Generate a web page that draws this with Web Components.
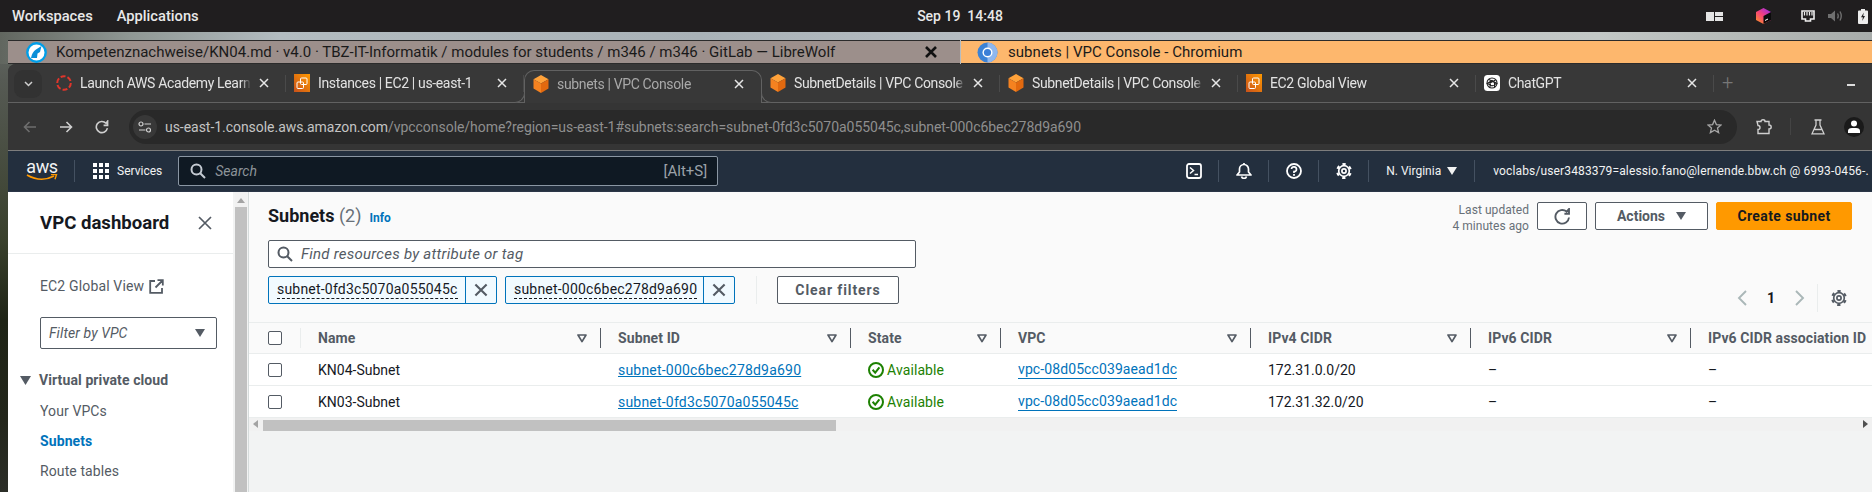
<!DOCTYPE html>
<html lang="en">
<head>
<meta charset="utf-8">
<title>subnets | VPC Console</title>
<style>
    html, body{ margin : 0; width : 1872px; height : 492px; overflow : hidden; }
    body{
        font-family : Roboto, "Noto Sans", sans-serif;
        display : flex;
        flex-direction : column;
        background : linear-gradient(180deg, #6d7370 0px, #565a54 80px, #39402c 240px, #1f2416 320px, #23261b 420px, #2c2e28 492px);
    }
</style>
</head>
<body>
<gnome-bar></gnome-bar>
<window-list></window-list>
<browser-window>
    <tab-strip>
        <browser-tab icon="launch">Launch AWS Academy Learner Lab</browser-tab>
        <browser-tab icon="ec2">Instances | EC2 | us-east-1</browser-tab>
        <browser-tab icon="box" active>subnets | VPC Console</browser-tab>
        <browser-tab icon="box">SubnetDetails | VPC Console</browser-tab>
        <browser-tab icon="box">SubnetDetails | VPC Console</browser-tab>
        <browser-tab icon="ec2">EC2 Global View</browser-tab>
        <browser-tab icon="gpt">ChatGPT</browser-tab>
    </tab-strip>
    <url-bar></url-bar>
    <aws-nav></aws-nav>
    <console-body>
        <vpc-sidebar slot="side"></vpc-sidebar>
        <subnet-header slot="main"></subnet-header>
        <subnet-table slot="main"></subnet-table>
    </console-body>
</browser-window>

<script>
"use strict";

//All the little drawings live here so the components stay readable
const ICONS = {
    box : `<svg width="16" height="18" viewBox="0 0 16 18"><polygon points="8,0 15.5,4.2 8,8.6 .5,4.2" fill="#ffa23a"/><polygon points=".5,4.2 8,8.6 8,18 .5,13.6" fill="#f58220"/><polygon points="15.5,4.2 8,8.6 8,18 15.5,13.6" fill="#e2690f"/></svg>`,
    ec2 : `<svg width="16" height="18" viewBox="0 0 16 18"><defs><linearGradient id="e" x1="0" y1="1" x2="1" y2="0"><stop offset="0" stop-color="#c8511b"/><stop offset="1" stop-color="#ff9900"/></linearGradient></defs><rect width="16" height="18" fill="url(#e)"/><g fill="none" stroke="#fff" stroke-width="1"><rect x="3" y="8" width="6.5" height="6.5" rx="1"/><rect x="6.5" y="4" width="6.5" height="6.5" rx="1"/></g></svg>`,
    launch : `<svg width="16" height="16" viewBox="0 0 16 16"><circle cx="8" cy="8" r="6.8" fill="none" stroke="#e0352b" stroke-width="2" stroke-dasharray="5 2.1"/></svg>`,
    gpt : `<svg width="16" height="16" viewBox="0 0 16 16"><rect width="16" height="16" rx="3.5" fill="#fff"/><g fill="none" stroke="#222" stroke-width="1.1"><circle cx="8" cy="8" r="5"/><path d="M5 4.5 L10.5 7.5 V12 M11.5 5 L6 8 L6 12.5 M3.2 8.5 L8 5.5 L12.8 8.5 L8 11 Z"/></g></svg>`,
    x : `<svg width="10" height="10" viewBox="0 0 10 10"><path d="M1 1 L9 9 M9 1 L1 9" stroke="currentColor" stroke-width="1.5" fill="none"/></svg>`,
    filter : `<svg width="10" height="9" viewBox="0 0 10 9"><path d="M1 1 H9 L5 7.6 Z" fill="none" stroke="#545b64" stroke-width="1.7" stroke-linejoin="round"/></svg>`,
    caret : `<svg width="10" height="8" viewBox="0 0 10 8"><path d="M0 0 H10 L5 8 Z" fill="currentColor"/></svg>`,
    mag : `<svg width="16" height="16" viewBox="0 0 16 16"><circle cx="6.5" cy="6.5" r="5" fill="none" stroke="currentColor" stroke-width="2"/><path d="M10.2 10.2 L15 15" stroke="currentColor" stroke-width="2"/></svg>`,
    gear : `<svg width="16" height="16" viewBox="0 0 16 16"><g fill="none" stroke="currentColor"><circle cx="8" cy="8" r="2.1" stroke-width="1.7"/><circle cx="8" cy="8" r="5.3" stroke-width="1.7"/><circle cx="8" cy="8" r="6.8" stroke-width="2.2" stroke-dasharray="3.2 3.92" transform="rotate(-103 8 8)"/></g></svg>`,
    check : `<svg width="16" height="16" viewBox="0 0 16 16"><circle cx="8" cy="8" r="7" fill="none" stroke="#1d8102" stroke-width="2"/><path d="M4.6 7.8 L7.2 10.6 L11.4 5.4" fill="none" stroke="#1d8102" stroke-width="2"/></svg>`
};

class GnomeBar extends HTMLElement{
    constructor(){
        super();
        this.attachShadow({ mode : "open" });
        this.shadowRoot.innerHTML = `
            <style>
                :host{ display : grid; grid-template-columns : 1fr auto 1fr; align-items : center; height : 32px; background : #201e1f; color : #e8e8e8; font-size : 14.7px; font-weight : 500; flex : none; }
                #left{ display : flex; gap : 24px; padding-left : 12px; }
                #clock{ font-size : 14px; padding-left : 48px; }
                #right{ display : flex; justify-content : flex-end; align-items : center; padding-right : 4px; }
                #layout{ margin-right : 33px; }
                #toolbox{ margin-right : 30px; }
                #net{ margin-right : 13px; }
                #sound{ margin-right : 15px; }
                svg{ display : block; }
            </style>
            <div id="left"><span>Workspaces</span><span>Applications</span></div>
            <div id="clock">Sep 19&nbsp; 14:48</div>
            <div id="right">
                <svg id="layout" width="17" height="9" viewBox="0 0 17 9"><path d="M0 0 H8 V9 H0 Z M9 0 H17 V4 H9 Z M9 5 H17 V9 H9 Z" fill="#e4e4e4"/></svg>
                <svg id="toolbox" width="15" height="16" viewBox="0 0 15 16"><defs><linearGradient id="t" x1="0" y1="1" x2=".8" y2="0"><stop offset="0" stop-color="#ff9a1f"/><stop offset=".55" stop-color="#f5417a"/><stop offset="1" stop-color="#a02be0"/></linearGradient></defs><polygon points="7.5,0 15,4 15,12 7.5,16 0,12 0,4" fill="url(#t)"/><polygon points="7.5,8 15,4 15,12 7.5,16" fill="#0b0b0b"/><path d="M9 12.5 L12 11" stroke="#fff" stroke-width="1"/></svg>
                <svg id="net" width="14" height="12" viewBox="0 0 14 12"><path d="M1 1 H13 V9 H9.5 V11 H4.5 V9 H1 Z" fill="none" stroke="#eee" stroke-width="1.6"/><path d="M3.5 2 V5.5 M6 2 V5.5 M8.5 2 V5.5 M11 2 V5.5" stroke="#eee" stroke-width="1.2"/></svg>
                <svg id="sound" width="15" height="12" viewBox="0 0 15 12"><path d="M0 4 H3 L7 .5 V11.5 L3 8 H0 Z" fill="#6f6f6f"/><path d="M9.5 3.5 Q11 6 9.5 8.5 M12 1.5 Q14.5 6 12 10.5" fill="none" stroke="#6f6f6f" stroke-width="1.4"/></svg>
                <svg width="10" height="15" viewBox="0 0 10 15"><path d="M3 0 H7 V1.5 H9 Q10 1.5 10 2.5 V14 Q10 15 9 15 H1 Q0 15 0 14 V2.5 Q0 1.5 1 1.5 H3 Z" fill="#ececec"/><path d="M5.8 3.5 L3 8.2 H4.9 L4.2 12 L7 7 H5.2 Z" fill="#201e1f"/></svg>
            </div>
        `;
    }
}
window.customElements.define("gnome-bar", GnomeBar);

class WindowList extends HTMLElement{
    constructor(){
        super();
        this.attachShadow({ mode : "open" });
        this.shadowRoot.innerHTML = `
            <style>
                :host{ display : flex; height : 24px; padding : 8px 0 0 8px; flex : none; font-size : 15px; color : #1a1a1a;
                    background : linear-gradient(90deg, #61665f 0, #8f9794 130px, #b3bcc0 280px, #a9b2b7 700px, #b7bec3 1000px, #c3c8c6 1600px, #a8acaa 1872px); }
                .win{ display : flex; align-items : center; border-top : 1px solid #2b2b2b; border-bottom : 1px solid #2b2b2b; box-sizing : border-box; height : 24px; white-space : nowrap; overflow : hidden; }
                #wolf{ width : 952px; background : #9c8f8b; padding-left : 18px; box-sizing : border-box; margin-right : 1px; }
                #chromium{ flex : 1; background : #fdb76d; padding-left : 16px; }
                svg{ flex : none; display : block; }
                #wolf span{ margin-left : 9px; flex : 1; }
                #close{ margin-right : 23px; color : #111; }
                #chromium span{ margin-left : 10px; letter-spacing : .05px; }
            </style>
            <div id="wolf" class="win">
                <svg width="21" height="21" viewBox="0 0 21 21"><circle cx="10.5" cy="10.5" r="9.2" fill="#fff" stroke="#009ee8" stroke-width="2.4"/><path d="M5 16 Q6 10 10 7.5 L15.5 4 L14 10 L11.5 11.5 L11 16 Z" fill="#0a8fd8"/></svg>
                <span>Kompetenznachweise/KN04.md · v4.0 · TBZ-IT-Informatik / modules for students / m346 / m346 · GitLab — LibreWolf</span>
                <svg id="close" width="12" height="12" viewBox="0 0 12 12"><path d="M1 1 L11 11 M11 1 L1 11" stroke="#111" stroke-width="2.6"/></svg>
            </div>
            <div id="chromium" class="win">
                <svg width="21" height="21" viewBox="0 0 21 21"><circle cx="10.5" cy="10.5" r="10" fill="#3b82d6"/><path d="M10.5 .5 A10 10 0 0 1 20.5 10.5 A10 10 0 0 1 10.5 20.5 Z" fill="#8fb7ee"/><circle cx="10.5" cy="10.5" r="5" fill="#fff"/><circle cx="10.5" cy="10.5" r="3.6" fill="#3b7fd8"/></svg>
                <span>subnets | VPC Console - Chromium</span>
            </div>
        `;
    }
}
window.customElements.define("window-list", WindowList);

class BrowserWindow extends HTMLElement{
    constructor(){
        super();
        this.attachShadow({ mode : "open" });
        this.shadowRoot.innerHTML = `
            <style>
                :host{ display : flex; flex-direction : column; flex : 1; margin-left : 8px; min-height : 0; overflow : hidden; border-radius : 8px 0 0 0; background : #383838; }
            </style>
            <slot></slot>
        `;
    }
}
window.customElements.define("browser-window", BrowserWindow);

class TabStrip extends HTMLElement{
    constructor(){
        super();
        this.attachShadow({ mode : "open" });
        this.shadowRoot.innerHTML = `
            <style>
                :host{ display : flex; height : 39px; flex : none; box-sizing : border-box; background : #383838; border-bottom : 1px solid #626262; padding-left : 6px; position : relative; }
                #list{ width : 28px; height : 28px; margin : 6px 6px 0 0; border-radius : 9px; background : #323232; display : flex; align-items : center; justify-content : center; flex : none; }
                #plus{ color : #777; font-size : 20px; font-weight : 300; line-height : 37px; margin-left : 8px; }
                #min{ margin-left : auto; margin-right : 17px; width : 8px; height : 2px; background : #ddd; align-self : center; margin-top : 3px; }
            </style>
            <div id="list"><svg width="9" height="6" viewBox="0 0 9 6"><path d="M1 1 L4.5 4.5 L8 1" fill="none" stroke="#cfcfcf" stroke-width="1.5"/></svg></div>
            <slot></slot>
            <span id="plus">+</span>
            <div id="min"></div>
        `;
    }
}
window.customElements.define("tab-strip", TabStrip);

class BrowserTab extends HTMLElement{
    constructor(){
        super();
        this.attachShadow({ mode : "open" });
        this.shadowRoot.innerHTML = `
            <style>
                :host{ display : flex; align-items : center; width : 238px; height : 38px; box-sizing : border-box; padding : 0 17px 0 8px; color : #e2e2e2; font-size : 14px; position : relative; flex : none; }
                :host::after{ content : ""; position : absolute; right : 0; top : 11px; height : 17px; width : 1px; background : #4a4a4a; }
                :host([active]){ color : #a9a9a9; background : #383838; margin-top : 6px; height : 33px; border : 1px solid #626262; border-bottom : none; border-radius : 10px 10px 0 0; padding-bottom : 7px; z-index : 1; }
                :host([active])::before, :host([active])::after{ content : ""; position : absolute; bottom : 0; top : auto; width : 10px; height : 10px; box-sizing : content-box; background : #383838; border-bottom : 1px solid #626262; }
                :host([active])::before{ left : -11px; border-right : 1px solid #626262; border-bottom-right-radius : 10px; }
                :host([active])::after{ right : -11px; border-left : 1px solid #626262; border-bottom-left-radius : 10px; }
                #icon{ width : 16px; height : 18px; display : flex; align-items : center; justify-content : center; flex : none; }
                #label{ flex : 1; margin-left : 8px; white-space : nowrap; overflow : hidden; letter-spacing : -.35px;
                    -webkit-mask-image : linear-gradient(90deg, #000 calc(100% - 10px), transparent); mask-image : linear-gradient(90deg, #000 calc(100% - 10px), transparent); }
                #x{ color : #e6e6e6; display : flex; margin-left : 8px; flex : none; }
            </style>
            <div id="icon"></div>
            <div id="label"><slot></slot></div>
            <div id="x">${ICONS.x}</div>
        `;
        this.shadowRoot.getElementById("icon").innerHTML = ICONS[this.getAttribute("icon")] || "";
    }
}
window.customElements.define("browser-tab", BrowserTab);

class UrlBar extends HTMLElement{
    constructor(){
        super();
        this.attachShadow({ mode : "open" });
        this.shadowRoot.innerHTML = `
            <style>
                :host{ display : flex; align-items : center; height : 48px; flex : none; box-sizing : border-box; background : #353535; border-bottom : 1px solid #7d7d7d; color : #cfcfcf; }
                .nav{ width : 36px; display : flex; justify-content : center; flex : none; }
                #back{ margin-left : 4px; color : #6e6e6e; }
                #box{ display : flex; align-items : center; width : 1608px; height : 34px; margin-left : 9px; border-radius : 17px; background : #292929; box-sizing : border-box; padding-left : 4px; flex : none; position : relative; }
                #tune{ width : 24px; height : 24px; border-radius : 12px; background : #383838; display : flex; align-items : center; justify-content : center; flex : none; }
                #url{ margin-left : 8px; padding-top : 1px; font-size : 14px; white-space : nowrap; color : #8f8f8f; letter-spacing : -.04px; flex : 1; }
                #url b{ font-weight : 400; color : #c4c4c4; }
                #star{ color : #a5a5a5; margin-right : 15px; display : flex; }
                .tool{ flex : none; display : flex; }
                #ext{ margin-left : 19px; }
                #sep{ width : 1px; height : 17px; background : #444; margin-left : 18px; flex : none; }
                #flask{ margin-left : 20px; }
                #avatar{ margin-left : 19px; width : 20px; height : 20px; border-radius : 50%; background : #1a1a1a; display : flex; align-items : center; justify-content : center; flex : none; }
                svg{ display : block; }
            </style>
            <div id="back" class="nav"><svg width="14" height="12" viewBox="0 0 14 12"><path d="M13 6 H2 M6.5 1 L1.5 6 L6.5 11" fill="none" stroke="currentColor" stroke-width="1.6"/></svg></div>
            <div class="nav"><svg width="14" height="12" viewBox="0 0 14 12"><path d="M1 6 H12 M7.5 1 L12.5 6 L7.5 11" fill="none" stroke="currentColor" stroke-width="1.6"/></svg></div>
            <div class="nav"><svg width="14" height="14" viewBox="0 0 14 14"><path d="M12.4 8.2 A5.6 5.6 0 1 1 11 3.2 L12.6 1.2 V5.4 H8.6" fill="none" stroke="currentColor" stroke-width="1.6"/></svg></div>
            <div id="box">
                <div id="tune"><svg width="14" height="12" viewBox="0 0 14 12"><g fill="none" stroke="#d0d0d0" stroke-width="1.2"><circle cx="3" cy="3" r="2"/><path d="M6.5 3 H13"/><circle cx="10.5" cy="9" r="2"/><path d="M1 9 H7.5"/></g></svg></div>
                <div id="url"><b>us-east-1.console.aws.amazon.com</b>/vpcconsole/home?region=us-east-1#subnets:search=subnet-0fd3c5070a055045c,subnet-000c6bec278d9a690</div>
                <div id="star"><svg width="15" height="15" viewBox="0 0 15 15"><path d="M7.5 1.2 L9.4 5.6 L14 6 L10.5 9 L11.6 13.6 L7.5 11.2 L3.4 13.6 L4.5 9 L1 6 L5.6 5.6 Z" fill="none" stroke="currentColor" stroke-width="1.3"/></svg></div>
            </div>
            <div id="ext" class="tool"><svg width="16" height="16" viewBox="0 0 16 16"><path d="M1 2.5 H5 Q5 .8 7 .8 Q9 .8 9 2.5 H13 V6 Q15.2 6 15.2 8 Q15.2 10 13 10 V14.5 H2 V10.5 Q4 10.5 4 8.5 Q4 6.5 2 6.5 Z" fill="none" stroke="#cfcfcf" stroke-width="1.4"/></svg></div>
            <div id="sep"></div>
            <div id="flask" class="tool"><svg width="14" height="16" viewBox="0 0 14 16"><path d="M3.5 1 H10.5 M5 1 V6 L1 14.8 H13 L9 6 V1 M3.6 10.5 H10.4" fill="none" stroke="#cfcfcf" stroke-width="1.3"/></svg></div>
            <div id="avatar"><svg width="12" height="13" viewBox="0 0 12 13"><circle cx="6" cy="3.6" r="3" fill="#fff"/><path d="M0 13 V11 Q0 8 4 8 H8 Q12 8 12 11 V13 Z" fill="#fff"/></svg></div>
        `;
    }
}
window.customElements.define("url-bar", UrlBar);

class AwsNav extends HTMLElement{
    constructor(){
        super();
        this.attachShadow({ mode : "open" });
        this.shadowRoot.innerHTML = `
            <style>
                :host{ display : flex; align-items : center; height : 41px; flex : none; background : #232f3e; color : #f2f3f3; font-size : 12px; overflow : hidden; white-space : nowrap; box-sizing : border-box; padding-bottom : 1px; border-bottom : 1px solid #2b3647; }
                #logo{ margin-left : 18px; width : 32px; flex : none; display : flex; flex-direction : column; align-items : center; }
                #logo span{ font-size : 18px; line-height : 14px; height : 14px; letter-spacing : -.3px; }
                .sep{ width : 1px; height : 22px; background : #445161; flex : none; }
                #grid{ margin : 0 8px 0 18px; flex : none; }
                #search{ display : flex; align-items : center; width : 540px; height : 30px; margin-left : 16px; box-sizing : border-box; border : 1px solid #8a96a3; border-radius : 2px; background : #0f1923; padding : 0 10px 0 11px; flex : none; color : #c5cbd3; }
                #search svg{ flex : none; }
                #search i{ margin-left : 9px; flex : 1; color : #8d9499; font-size : 14px; }
                #search span{ color : #9aa1a8; font-size : 15px; }
                #tools{ display : flex; align-items : center; margin-left : 451px; flex : none; }
                #tools .ic{ display : flex; justify-content : center; width : 49px; color : #fff; flex : none; }
                #tools .sep{ height : 22px; }
                #region{ display : flex; align-items : center; gap : 6px; padding : 0 17px 0 10px; margin-left : 7px; flex : none; }
                #user{ margin-left : 18px; letter-spacing : .14px; }
                svg{ display : block; }
            </style>
            <div id="logo">
                <span>aws</span>
                <svg width="32" height="8" viewBox="0 0 32 8"><path d="M1 1 Q15 9 28 2" fill="none" stroke="#ff9900" stroke-width="1.7"/><path d="M25 .6 L30.5 .6 L29 5.2" fill="none" stroke="#ff9900" stroke-width="1.4"/></svg>
            </div>
            <div class="sep" style="margin-left:16px"></div>
            <svg id="grid" width="16" height="16" viewBox="0 0 16 16" fill="#fff"><rect width="4" height="4"/><rect x="6" width="4" height="4"/><rect x="12" width="4" height="4"/><rect y="6" width="4" height="4"/><rect x="6" y="6" width="4" height="4"/><rect x="12" y="6" width="4" height="4"/><rect y="12" width="4" height="4"/><rect x="6" y="12" width="4" height="4"/><rect x="12" y="12" width="4" height="4"/></svg>
            <div>Services</div>
            <div id="search">${ICONS.mag}<i>Search</i><span>[Alt+S]</span></div>
            <div id="tools">
                <div class="ic"><svg width="16" height="16" viewBox="0 0 16 16"><rect x="1" y="1" width="14" height="14" rx="2" fill="none" stroke="#fff" stroke-width="1.8"/><path d="M4 4.5 L7.5 7.5 L4 10.5 M8.5 11.5 H12" fill="none" stroke="#fff" stroke-width="1.5"/></svg></div>
                <div class="sep"></div>
                <div class="ic"><svg width="16" height="16" viewBox="0 0 16 16"><path d="M1 12 L3.5 9 V6 A4.5 4.5 0 0 1 12.5 6 V9 L15 12 Z" fill="none" stroke="#fff" stroke-width="1.7" stroke-linejoin="round"/><path d="M5.5 13.5 A2.6 2.6 0 0 0 10.5 13.5" fill="none" stroke="#fff" stroke-width="1.7"/><path d="M8 0 V1.5" stroke="#fff" stroke-width="1.7"/></svg></div>
                <div class="sep"></div>
                <div class="ic"><svg width="16" height="16" viewBox="0 0 16 16"><circle cx="8" cy="8" r="7" fill="none" stroke="#fff" stroke-width="1.8"/><path d="M5.5 6 A2.5 2.4 0 1 1 8 8.6 V10" fill="none" stroke="#fff" stroke-width="1.7"/><rect x="7.1" y="11" width="1.8" height="1.8" fill="#fff"/></svg></div>
                <div class="sep"></div>
                <div class="ic">${ICONS.gear}</div>
                <div class="sep"></div>
                <div id="region">N. Virginia ${ICONS.caret}</div>
                <div class="sep"></div>
                <div id="user">voclabs/user3483379=alessio.fano@lernende.bbw.ch @ 6993-0456-.</div>
            </div>
        `;
    }
}
window.customElements.define("aws-nav", AwsNav);

class ConsoleBody extends HTMLElement{
    constructor(){
        super();
        this.attachShadow({ mode : "open" });
        this.shadowRoot.innerHTML = `
            <style>
                :host{ display : flex; flex : 1; min-height : 0; background : #f2f3f3; }
                #scroll{ width : 12px; margin : 0 1px 0 2px; background : #f1f1f1; display : flex; flex-direction : column; align-items : center; flex : none; }
                #scroll svg{ margin : 6px 0 4px; flex : none; display : block; }
                #thumb{ width : 100%; flex : 1; background : #c1c1c1; }
                #main{ flex : 1; min-width : 0; display : flex; flex-direction : column; border-left : 1px solid #d5dbdb; }
            </style>
            <slot name="side"></slot>
            <div id="scroll">
                <svg width="8" height="5" viewBox="0 0 8 5"><path d="M4 0 L8 5 H0 Z" fill="#a3a3a3"/></svg>
                <div id="thumb"></div>
            </div>
            <div id="main"><slot name="main"></slot></div>
        `;
    }
}
window.customElements.define("console-body", ConsoleBody);

class VpcSidebar extends HTMLElement{
    constructor(){
        super();
        this.attachShadow({ mode : "open" });
        this.shadowRoot.innerHTML = `
            <style>
                :host{ display : block; width : 225px; flex : none; background : #fff; color : #545b64; font-size : 14px; overflow : hidden; }
                #head{ display : flex; align-items : center; justify-content : space-between; height : 62px; box-sizing : border-box; padding : 0 21px 0 32px; border-bottom : 1px solid #eaeded; color : #16191f; font-size : 18.6px; font-weight : 700; }
                #head svg{ color : #545b64; display : block; }
                #global{ display : flex; align-items : center; gap : 5px; margin : 23px 0 0 32px; line-height : 18px; letter-spacing : .15px; }
                #filter{ display : flex; align-items : center; justify-content : space-between; box-sizing : border-box; width : 177px; height : 32px; margin : 22px 0 0 32px; padding : 0 11px 0 8px; border : 1px solid #545b64; border-radius : 2px; font-style : italic; letter-spacing : .1px; }
                #group{ display : flex; align-items : center; gap : 8px; margin : 22px 0 0 12px; font-weight : 700; letter-spacing : .1px; line-height : 18px; }
                .link{ margin : 12px 0 0 32px; line-height : 18px; letter-spacing : .1px; }
                #active{ color : #0073bb; font-weight : 700; }
            </style>
            <div id="head">VPC dashboard <svg width="14" height="14" viewBox="0 0 14 14"><path d="M1 1 L13 13 M13 1 L1 13" stroke="currentColor" stroke-width="1.7"/></svg></div>
            <div id="global">EC2 Global View <svg width="15" height="15" viewBox="0 0 15 15"><path d="M6 2 H1.2 V13.8 H13 V9 M8.5 1.2 H13.8 V6.5 M13.5 1.5 L6.5 8.5" fill="none" stroke="#545b64" stroke-width="1.8"/></svg></div>
            <div id="filter">Filter by VPC ${ICONS.caret}</div>
            <div id="group"><svg width="11" height="9" viewBox="0 0 11 9"><path d="M0 0 H11 L5.5 9 Z" fill="#545b64"/></svg>Virtual private cloud</div>
            <div class="link" style="margin-top:13px">Your VPCs</div>
            <div class="link" id="active">Subnets</div>
            <div class="link">Route tables</div>
        `;
    }
}
window.customElements.define("vpc-sidebar", VpcSidebar);

class SubnetHeader extends HTMLElement{
    constructor(){
        super();
        this.attachShadow({ mode : "open" });
        this.shadowRoot.innerHTML = `
            <style>
                :host{ display : block; height : 130px; box-sizing : border-box; flex : none; padding : 10px 20px 0 19px; background : #fafafa; color : #16191f; font-size : 14px; }
                #top{ display : flex; align-items : flex-start; height : 28px; }
                h1{ margin : 0; font-size : 18px; line-height : 28px; font-weight : 700; white-space : nowrap; }
                h1 span{ font-weight : 400; color : #687078; }
                #info{ color : #0073bb; font-size : 12px; font-weight : 700; margin : 8px 0 0 8px; line-height : 16px; }
                #updated{ margin-left : auto; text-align : right; color : #687078; font-size : 12px; line-height : 16px; letter-spacing : .05px; }
                button{ font : inherit; font-weight : 700; height : 28px; box-sizing : border-box; border : 1px solid #545b64; background : #fff; color : #545b64; border-radius : 2px; padding : 0; display : flex; align-items : center; justify-content : center; flex : none; }
                #refresh{ width : 50px; margin-left : 8px; }
                #actions{ width : 113px; margin-left : 8px; gap : 11px; }
                #create{ width : 136px; margin-left : 8px; background : #ff9900; border-color : #ff9900; color : #16191f; letter-spacing : .4px; }
                #find{ display : flex; align-items : center; width : 648px; height : 28px; box-sizing : border-box; margin-top : 10px; padding-left : 8px; border : 1px solid #545b64; border-radius : 2px; background : #fff; color : #545b64; font-style : italic; font-size : 15px; letter-spacing : .25px; }
                #find svg{ margin-right : 8px; }
                #row{ display : flex; align-items : flex-start; margin-top : 8px; }
                .chip{ display : flex; width : 230px; height : 28px; box-sizing : border-box; border : 1px solid #0073bb; border-radius : 2px; background : #f1faff; margin-right : 8px; flex : none; }
                .chip:first-child{ width : 229px; }
                .chip span{ flex : 1; display : flex; align-items : center; padding-left : 8px; white-space : nowrap; }
                .chip u{ text-decoration : none; border-bottom : 1px dashed #16191f; line-height : 17px; letter-spacing : .2px; }
                .chip b{ width : 30px; display : flex; align-items : center; justify-content : center; border-left : 1px solid #0073bb; color : #545b64; flex : none; }
                #div{ width : 1px; height : 28px; background : #eaeded; margin : 0 20px 0 13px; flex : none; }
                #clear{ width : 122px; letter-spacing : .9px; }
                #pager{ display : flex; align-items : center; height : 28px; margin : 8px 0 0 auto; color : #16191f; }
                #pager svg{ display : block; }
                #num{ margin : 0 20px 0 20px; font-weight : 700; }
                #psep{ width : 1px; height : 28px; background : #eaeded; margin : 0 13px 0 12px; }
                #pgear{ color : #545b64; margin-right : 5px; }
            </style>
            <div id="top">
                <h1>Subnets <span>(2)</span></h1>
                <div id="info">Info</div>
                <div id="updated">Last updated<br>4 minutes ago</div>
                <button id="refresh" aria-label="Refresh"><svg width="17" height="17" viewBox="0 0 17 17"><path d="M15 9.5 A6.8 6.8 0 1 1 12.6 3.6 L15 1 V5.8 H10.4" fill="none" stroke="#545b64" stroke-width="1.9"/></svg></button>
                <button id="actions">Actions ${ICONS.caret}</button>
                <button id="create">Create subnet</button>
            </div>
            <div id="find">${ICONS.mag}Find resources by attribute or tag</div>
            <div id="row">
                <div class="chip"><span><u>subnet-0fd3c5070a055045c</u></span><b>${ICONS.x.replace('width="10" height="10"', 'width="14" height="14"')}</b></div>
                <div class="chip"><span><u>subnet-000c6bec278d9a690</u></span><b>${ICONS.x.replace('width="10" height="10"', 'width="14" height="14"')}</b></div>
                <div id="div"></div>
                <button id="clear">Clear filters</button>
                <div id="pager">
                    <svg width="10" height="16" viewBox="0 0 10 16"><path d="M9 1 L2 8 L9 15" fill="none" stroke="#aab7b8" stroke-width="1.9"/></svg>
                    <span id="num">1</span>
                    <svg width="10" height="16" viewBox="0 0 10 16"><path d="M1 1 L8 8 L1 15" fill="none" stroke="#aab7b8" stroke-width="1.9"/></svg>
                    <div id="psep"></div>
                    <div id="pgear">${ICONS.gear}</div>
                </div>
            </div>
        `;
    }
}
window.customElements.define("subnet-header", SubnetHeader);

class SubnetTable extends HTMLElement{
    constructor(){
        super();
        this.attachShadow({ mode : "open" });
        var columns = ["Name", "Subnet ID", "State", "VPC", "IPv4 CIDR", "IPv6 CIDR", "IPv6 CIDR association ID"];
        var rows = [
            ["KN04-Subnet", "subnet-000c6bec278d9a690", "vpc-08d05cc039aead1dc", "172.31.0.0/20"],
            ["KN03-Subnet", "subnet-0fd3c5070a055045c", "vpc-08d05cc039aead1dc", "172.31.32.0/20"]
        ];
        var headCells = columns.map((name, i)=>{
            if(i == columns.length - 1) return `<div class="th last">${name}</div>`;
            return `<div class="th"><span>${name}</span><em>${ICONS.filter}</em></div>`;
        }).join("");
        var bodyRows = rows.map((r)=>`
            <div class="tr">
                <div class="td box"><i></i></div>
                <div class="td">${r[0]}</div>
                <div class="td"><a>${r[1]}</a></div>
                <div class="td ok">${ICONS.check}Available</div>
                <div class="td"><a class="solid">${r[2]}</a></div>
                <div class="td">${r[3]}</div>
                <div class="td">–</div>
                <div class="td">–</div>
            </div>`).join("");
        this.shadowRoot.innerHTML = `
            <style>
                :host{ display : block; flex : none; font-size : 14px; color : #16191f; overflow : hidden; }
                .tr{ display : grid; grid-template-columns : 52px 300px 250px 150px 250px 220px 220px 200px; height : 32px; box-sizing : border-box; border-bottom : 1px solid #eaeded; background : #fff; white-space : nowrap; }
                .tr:last-of-type{ height : 33px; border-bottom : none; }
                #head{ height : 32px; background : #fafafa; border-top : 1px solid #eaeded; border-bottom : 1px solid #eaeded; font-weight : 700; color : #545b64; }
                .th, .td{ display : flex; align-items : center; padding-left : 17px; min-width : 0; }
                .th{ justify-content : space-between; padding-right : 14px; position : relative; letter-spacing : .1px; }
                .th::after{ content : ""; position : absolute; right : 0; top : 5px; bottom : 5px; width : 1px; background : #545b64; }
                .last{ justify-content : flex-start; padding-right : 0; }
                .last::after{ display : none; }
                .th em{ display : flex; }
                .box{ padding-left : 19px; position : relative; }
                .first::after{ background : #eaeded; }
                .box i{ display : block; width : 14px; height : 14px; box-sizing : border-box; border : 1px solid #545b64; border-radius : 2px; background : #fff; flex : none; }
                a{ color : #0073bb; text-decoration : underline; letter-spacing : .2px; }
                a.solid{ text-decoration : none; border-bottom : 1px solid #0073bb; line-height : 17px; letter-spacing : .1px; }
                .ok{ color : #1d8102; gap : 3px; letter-spacing : .1px; }
                .ok svg{ flex : none; }
                #bar{ display : flex; align-items : flex-end; height : 13px; background : #f1f1f1; }
                #bar svg{ flex : none; display : block; margin-bottom : 3px; }
                #lft{ margin : 0 5px 0 4px; }
                #thumb{ width : 573px; height : 11px; background : #c1c1c1; flex : none; }
                #rgt{ margin-left : auto; margin-right : 4px; }
            </style>
            <div id="head" class="tr">
                <div class="th box first"><i></i></div>
                ${headCells}
            </div>
            ${bodyRows}
            <div id="bar">
                <svg id="lft" width="5" height="8" viewBox="0 0 5 8"><path d="M5 0 V8 L0 4 Z" fill="#a3a3a3"/></svg>
                <div id="thumb"></div>
                <svg id="rgt" width="5" height="8" viewBox="0 0 5 8"><path d="M0 0 V8 L5 4 Z" fill="#505050"/></svg>
            </div>
        `;
    }
}
window.customElements.define("subnet-table", SubnetTable);
</script>
</body>
</html>
